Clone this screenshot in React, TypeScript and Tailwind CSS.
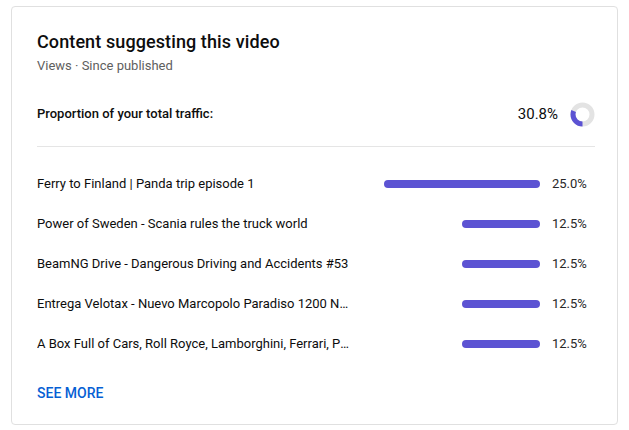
import * as React from "react";

const rows = [
  { title: "Ferry to Finland | Panda trip episode 1", value: 25.0 },
  { title: "Power of Sweden - Scania rules the truck world", value: 12.5 },
  { title: "BeamNG Drive - Dangerous Driving and Accidents #53", value: 12.5 },
  { title: "Entrega Velotax - Nuevo Marcopolo Paradiso 1200 New G7 | Mercedes-Benz", value: 12.5 },
  { title: "A Box Full of Cars, Roll Royce, Lamborghini, Ferrari, Porsche", value: 12.5 },
];

function Donut({ pct }: { pct: number }) {
  const r = 9.5;
  const c = 2 * Math.PI * r;
  const len = (pct / 100) * c;
  // arc starts at the bottom and runs clockwise
  return (
    <svg width="25" height="25" viewBox="0 0 25 25">
      <circle cx="12.5" cy="12.5" r={r} fill="none" stroke="#e3e3e3" strokeWidth="5" />
      <circle
        cx="12.5"
        cy="12.5"
        r={r}
        fill="none"
        stroke="#5c53d3"
        strokeWidth="5"
        strokeDasharray={`${len} ${c}`}
        transform="rotate(90 12.5 12.5)"
      />
    </svg>
  );
}

export default function App() {
  return (
    <div className="min-h-[430px] bg-white pl-[11px] pt-[6px] font-['Roboto',sans-serif]">
      <div className="h-[419px] w-[607px] rounded-[4px] border border-[#e0e0e0] pl-[25px] pr-[22px] pt-[23px]">
        <h2 className="text-[18px] font-medium leading-[24px] tracking-[0.1px] text-[#0d0d0d]">
          Content suggesting this video
        </h2>
        <p className="mt-[3px] text-[13px] leading-[18px] text-[#606060]">
          Views · Since published
        </p>

        <div className="mt-[27px] flex h-[24px] items-center">
          <span className="flex-1 text-[13px] font-medium text-[#0d0d0d]">
            Proportion of your total traffic:
          </span>
          <span className="text-[15px] leading-[20px] text-[#0d0d0d]">30.8%</span>
          <span className="ml-[12px]">
            <Donut pct={30.8} />
          </span>
        </div>

        <div className="mt-[20px] border-t border-[#e5e5e5]" />

        <div className="mt-[17px]">
          {rows.map((row) => (
            <div key={row.title} className="flex h-[40px] items-center">
              <span className="w-[316px] truncate text-[13px] text-[#0d0d0d]">{row.title}</span>
              <div className="flex flex-1 justify-end">
                <div
                  className="h-[8px] rounded-full bg-[#5c53d3]"
                  style={{ width: `${row.value * 6.24}px` }}
                />
              </div>
              <span className="ml-[12px] w-[43px] text-[13px] text-[#282828]">
                {row.value.toFixed(1)}%
              </span>
            </div>
          ))}
        </div>

        <button className="mt-[19px] text-[14px] font-medium leading-[20px] text-[#065fd4]">
          SEE MORE
        </button>
      </div>
    </div>
  );
}
